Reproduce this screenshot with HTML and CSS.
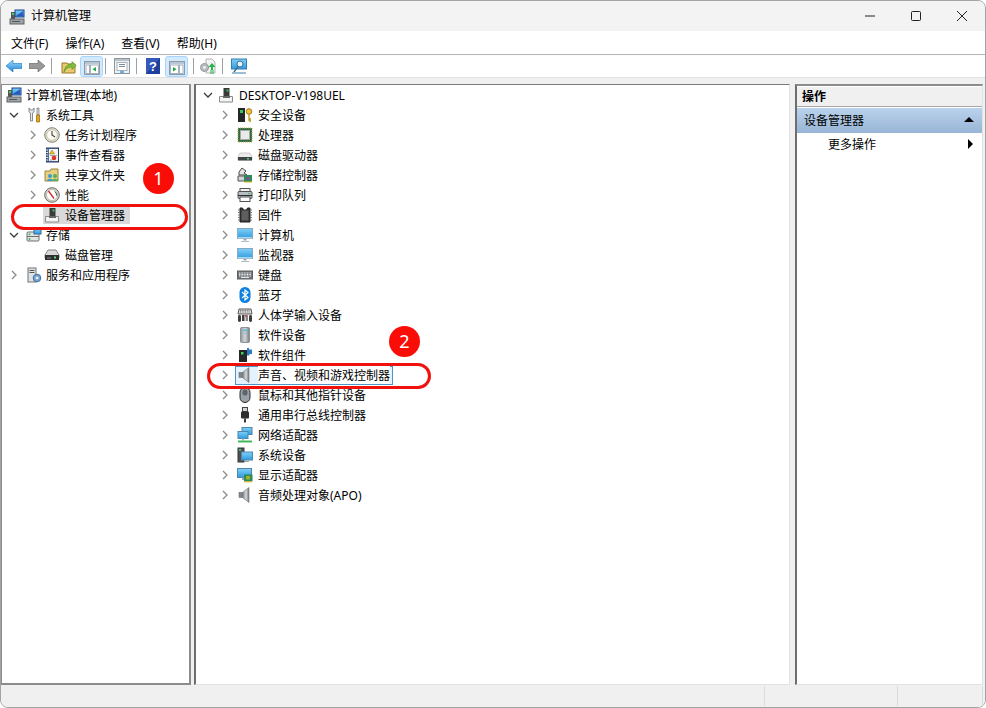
FILE: index.html
```html
<!DOCTYPE html>
<html lang="zh-CN">
<head>
<meta charset="utf-8">
<title>计算机管理</title>
<link rel="stylesheet" href="styles.css">
</head>
<body>
<svg class="defs" width="0" height="0">
  <defs>
    <linearGradient id="scr" x1="0" y1="0" x2="0" y2="1"><stop offset="0" stop-color="#7fd0f7"/><stop offset="1" stop-color="#2f9be0"/></linearGradient>
    <linearGradient id="blue" x1="0" y1="0" x2="0" y2="1"><stop offset="0" stop-color="#9fdcfb"/><stop offset="1" stop-color="#1f86d8"/></linearGradient>
    <linearGradient id="metal" x1="0" y1="0" x2="1" y2="0"><stop offset="0" stop-color="#8e9499"/><stop offset=".5" stop-color="#d4d8db"/><stop offset="1" stop-color="#74797d"/></linearGradient>
    <symbol id="i-mgmt" viewBox="0 0 16 16"><rect x="6" y="1" width="9" height="7" fill="url(#scr)" stroke="#1c3f8f"/><path d="M7 7l7-5v5z" fill="#2433a8" opacity=".7"/><rect x="2" y="3" width="4" height="7" fill="#555"/><rect x="3" y="4" width="2" height="2" fill="#3bd46a"/><rect x="1" y="10" width="14" height="5" fill="#9da3a6" stroke="#5e6365"/><path d="M3 12.500h8" stroke="#555"/></symbol>
    <symbol id="i-device" viewBox="0 0 16 16"><rect x="5.500" y="1" width="6" height="8" fill="#3a3a3a"/><rect x="8.500" y="2.500" width="2" height="2" fill="#38c45c"/><path d="M1.500 9.500h13v5.500h-13z" fill="#f4f4f4" stroke="#8a8a8a"/><path d="M5 9h7v2H5z" fill="#666"/></symbol>
    <symbol id="i-tools" viewBox="0 0 16 16"><path d="M3 1v4l1.500 1v8h2V6L8 5V1L6.500 3h-2z" fill="#e9eaeb" stroke="#6d7174" stroke-width=".8"/><path d="M11 1h2v7h-2z" fill="#d8d8d8" stroke="#777" stroke-width=".7"/><path d="M10.500 8h3v7h-3z" fill="#e2a81a" stroke="#92690c" stroke-width=".7"/></symbol>
    <symbol id="i-clock" viewBox="0 0 16 16"><circle cx="8" cy="8" r="7.300" fill="#e3dfd2" stroke="#80806f"/><circle cx="8" cy="8" r="5.300" fill="#fbfaf3" stroke="#b3ae98" stroke-width=".6"/><path d="M8 4v4l3 2" fill="none" stroke="#3d3d3d" stroke-width="1.100"/></symbol>
    <symbol id="i-event" viewBox="0 0 16 16"><rect x="2.500" y="1" width="12" height="14" fill="#4a6fa5" stroke="#2b3f63"/><rect x="5" y="2" width="9" height="12" fill="#f3f3f3"/><path d="M8 3l2.500 4h-5z" fill="#f0c020" stroke="#8c6f0c" stroke-width=".5"/><circle cx="10" cy="11" r="2.300" fill="#d9342b"/><path d="M6 8.500h7M6 13h2" stroke="#889" stroke-width=".8"/><path d="M2 3h2M2 5.500h2M2 8h2M2 10.500h2M2 13h2" stroke="#ddd"/></symbol>
    <symbol id="i-share" viewBox="0 0 16 16"><path d="M1 4h5l1-2h7v12H1z" fill="#e8d083" stroke="#9c8438"/><circle cx="6" cy="9" r="2" fill="#3d9ad1"/><path d="M3 14c0-3 6-3 6 0z" fill="#3d9ad1"/><circle cx="11" cy="9" r="2" fill="#4db45c"/><path d="M8 14c0-3 6-3 6 0z" fill="#4db45c"/></symbol>
    <symbol id="i-perf" viewBox="0 0 16 16"><circle cx="8" cy="8" r="7.300" fill="#d8d8d0" stroke="#6b6b64"/><circle cx="8" cy="8" r="5.500" fill="#fff" stroke="#99998f" stroke-width=".6"/><path d="M4.500 4L10 11.500" stroke="#d22a20" stroke-width="1.300"/><path d="M11 4.500a5 5 0 0 1 1.500 4" stroke="#3f3f3f" fill="none"/></symbol>
    <symbol id="i-storage" viewBox="0 0 16 16"><rect x="1" y="5" width="12" height="9" rx="1" fill="#e4e4e4" stroke="#6e6e6e"/><path d="M1 9.500h12" stroke="#6e6e6e"/><rect x="8" y="1" width="7" height="6" fill="url(#scr)" stroke="#336a99"/><circle cx="3.500" cy="7.300" r="1" fill="#45b45e"/><circle cx="3.500" cy="12" r="1" fill="#45b45e"/></symbol>
    <symbol id="i-disk" viewBox="0 0 16 16"><path d="M4 3h8l3 5v3H1V8z" fill="#d9d9d9" stroke="#848484"/><rect x="1" y="8" width="14" height="5" fill="#2f2f2f"/><rect x="10" y="9.500" width="2" height="2" fill="#4ee07a"/><path d="M3 11h4" stroke="#8a8a8a"/></symbol>
    <symbol id="i-service" viewBox="0 0 16 16"><rect x="2" y="1" width="8" height="14" fill="#dfe3e6" stroke="#6e7478"/><path d="M3.500 3.500h5M3.500 5.500h5" stroke="#555"/><circle cx="11" cy="11" r="3.800" fill="#7aa7cf" stroke="#3f6d99"/><circle cx="11" cy="11" r="1.300" fill="#eef"/></symbol>
    <symbol id="i-security" viewBox="0 0 16 16"><rect x="1" y="1" width="7" height="14" fill="#272727"/><rect x="3" y="3" width="3" height="3" fill="#36c75c"/><circle cx="12" cy="4.500" r="2.800" fill="#f0c040" stroke="#a27b12"/><path d="M12 7v7M12 12h2M12 14h2" stroke="#bf9218" stroke-width="1.300"/></symbol>
    <symbol id="i-cpu" viewBox="0 0 16 16"><rect x="1" y="1" width="14" height="14" fill="#2d6b49"/><path d="M1 1h14v14H1z" fill="none" stroke="#c8a53a" stroke-dasharray="1 1"/><rect x="3.500" y="3.500" width="9" height="9" fill="#e7ebe9" stroke="#a5aaa7"/></symbol>
    <symbol id="i-drive" viewBox="0 0 16 16"><path d="M3 6h10l2 4v3H1v-3z" fill="#ececec" stroke="#b3b3b3" stroke-width=".6"/><rect x="1" y="10" width="14" height="3.500" fill="#3f4447"/><rect x="10" y="11" width="2" height="1.500" fill="#54d67c"/></symbol>
    <symbol id="i-ctrl" viewBox="0 0 16 16"><path d="M5 1l4 3-2 2 3 2H2V5z" fill="#e4e4e4" stroke="#4a4a4a"/><path d="M1 9h7v5H1z" fill="#cfd2d4" stroke="#555"/><rect x="7" y="8" width="8" height="7" fill="#2f8a58"/><rect x="9" y="10" width="3" height="3" fill="#7a4fa0"/><path d="M7 15h8" stroke="#e2b72d"/></symbol>
    <symbol id="i-printer" viewBox="0 0 16 16"><rect x="3" y="1.500" width="10" height="3" fill="#f2f2f2" stroke="#555"/><rect x="1" y="4.500" width="14" height="7" rx="1" fill="#b9c0c4" stroke="#4c5256"/><rect x="11" y="6" width="2" height="1.200" fill="#41c46a"/><rect x="3" y="10" width="10" height="4.500" fill="#fff" stroke="#555"/><rect x="1" y="8" width="14" height="1" fill="#2b2f32"/></symbol>
    <symbol id="i-chip" viewBox="0 0 16 16"><path d="M3 1h2.500l1 2h3l1-2H13v14H3z" fill="#333" stroke="#222"/><rect x="4.500" y="3.500" width="7" height="10" fill="#5e5e5e"/><path d="M1 3h2M1 5.500h2M1 8h2M1 10.500h2M1 13h2M13 3h2M13 5.500h2M13 8h2M13 10.500h2M13 13h2" stroke="#777"/></symbol>
    <symbol id="i-monitor" viewBox="0 0 16 16"><rect x=".5" y="1.500" width="15" height="10" fill="url(#scr)" stroke="#86a9c2"/><path d="M1 10.800h14" stroke="#dceffa"/><path d="M6.500 12h3v1.500h-3z" fill="#98a8b3"/><path d="M4 14h8v1H4z" fill="#b2bcc4"/></symbol>
    <symbol id="i-keyboard" viewBox="0 0 16 16"><rect x=".5" y="4" width="15" height="8" fill="#70767a" stroke="#5c6063"/><path d="M2 6h12M2 7.500h12M2 9h12" stroke="#eceeef" stroke-dasharray="1 .6"/><path d="M4 10.500h8" stroke="#e4e6e7"/></symbol>
    <symbol id="i-bt" viewBox="0 0 16 16"><rect x="2.500" y="0" width="11" height="16" rx="5.500" fill="#0c7fdf"/><path d="M5 5l6 5.500L8 13V3l3 2.500L5 11" fill="none" stroke="#fff" stroke-width="1.200"/></symbol>
    <symbol id="i-hid" viewBox="0 0 16 16"><path d="M2 2h12l1 5H1z" fill="#dcdcdc" stroke="#575757"/><path d="M3 3.500h10M3 5h10" stroke="#777" stroke-dasharray="1 .7"/><rect x="1" y="8" width="3" height="7" rx="1.400" fill="#3e3e3e"/><rect x="12" y="8" width="3" height="7" rx="1.400" fill="#3e3e3e"/><rect x="5" y="8" width="2.500" height="6" fill="#3e3e3e"/><rect x="8.500" y="8" width="2.500" height="6" fill="#888"/><rect x="8" y="8" width="1.500" height="1.500" fill="#d33"/></symbol>
    <symbol id="i-swdev" viewBox="0 0 16 16"><rect x="3.500" y="0.500" width="9" height="15" rx="1" fill="url(#metal)" stroke="#8c9296"/><rect x="6" y="2.500" width="4" height="1.500" fill="#49c4d8"/><circle cx="8" cy="6" r=".8" fill="#49c4d8"/></symbol>
    <symbol id="i-swcomp" viewBox="0 0 16 16"><rect x="2" y="3" width="8" height="12" fill="#262626"/><rect x="4" y="5" width="2.500" height="2.500" fill="#38d35e"/><path d="M10 1h2v1.500h3V7h-2.500v1.500H10z" fill="#2b7cc4"/></symbol>
    <symbol id="i-speaker" viewBox="0 0 16 16"><rect x="2" y="5.500" width="4" height="5" fill="#7f8589" stroke="#6c7174" stroke-width=".6"/><path d="M6 5L12 .5v15L6 11z" fill="url(#metal)" stroke="#6f7477" stroke-width=".6"/></symbol>
    <symbol id="i-mouse" viewBox="0 0 16 16"><rect x="3" y="0.500" width="10" height="15" rx="5" fill="#9aa1a8" stroke="#2c2c2c"/><rect x="5.500" y="2.500" width="5" height="6" rx="2.300" fill="#5d646b"/></symbol>
    <symbol id="i-usb" viewBox="0 0 16 16"><rect x="5.500" y="0.500" width="5" height="4" fill="#d5d5d5" stroke="#444"/><rect x="4" y="4.500" width="8" height="7" rx="1" fill="#2e2e2e"/><path d="M7 11.500h2V15.500H7z" fill="#3c3c3c"/></symbol>
    <symbol id="i-net" viewBox="0 0 16 16"><rect x="5" y="0.500" width="10" height="7" fill="url(#scr)" stroke="#4e86ad"/><rect x="1" y="4.500" width="10" height="7" fill="url(#scr)" stroke="#4e86ad"/><path d="M5 11.500h2v2H5z" fill="#9bb"/><path d="M1 14.500h14" stroke="#42b857" stroke-width="2"/></symbol>
    <symbol id="i-sys" viewBox="0 0 16 16"><rect x="1" y="1" width="6" height="14" fill="#4c5154" stroke="#33373a"/><rect x="2" y="2" width="2" height="1.500" fill="#58d47c"/><rect x="4.500" y="5" width="11" height="8" fill="url(#scr)" stroke="#4e86ad"/><path d="M8 13.500h4v1.500H8z" fill="#9aa"/></symbol>
    <symbol id="i-gpu" viewBox="0 0 16 16"><rect x=".5" y="1.500" width="14" height="9" fill="url(#scr)" stroke="#4e86ad"/><path d="M5 10.500h4V13H5z" fill="#96a4ae"/><rect x="7" y="7.500" width="8.500" height="7" fill="#2f8a58"/><rect x="9" y="9" width="4" height="3.500" fill="#98b42e"/><path d="M7 14.800h8" stroke="#e2b72d"/></symbol>
    <symbol id="t-back" viewBox="0 0 16 12"><path d="M7 0L0 6l7 6V8.500h9v-5H7z" fill="url(#blue)" stroke="#1d74c2" stroke-width=".6"/></symbol>
    <symbol id="t-fwd" viewBox="0 0 16 12"><path d="M9 0l7 6-7 6V8.500H0v-5h9z" fill="#9a9a9a" stroke="#5c5c5c" stroke-width=".6"/></symbol>
    <symbol id="t-folder" viewBox="0 0 16 16"><path d="M1 5h5l1 1h7v9H1z" fill="#e9c96c" stroke="#987a2a"/><path d="M3 14c1-6 4-8 8-8V3.500l4 4-4 4V9c-3 0-6 1-8 5z" fill="#82bf3b" stroke="#4b8a22" stroke-width=".6"/></symbol>
    <symbol id="t-left" viewBox="0 0 16 14"><rect x=".5" y=".5" width="15" height="13" fill="#eef3f8" stroke="#8a9aaa"/><rect x="1" y="1" width="14" height="2" fill="#b9c6d3"/><rect x="2" y="4" width="3.500" height="8.500" fill="#fff" stroke="#a4b2c0"/><rect x="6.500" y="4" width="8" height="8.500" fill="#fff" stroke="#a4b2c0"/><path d="M12 6v4.500L8.500 8.200z" fill="#1fa83c"/></symbol>
    <symbol id="t-right" viewBox="0 0 16 14"><rect x=".5" y=".5" width="15" height="13" fill="#eef3f8" stroke="#8a9aaa"/><rect x="1" y="1" width="14" height="2" fill="#b9c6d3"/><rect x="1.500" y="4" width="8" height="8.500" fill="#fff" stroke="#a4b2c0"/><rect x="10.500" y="4" width="3.500" height="8.500" fill="#fff" stroke="#a4b2c0"/><path d="M4 6v4.500l3.500-2.300z" fill="#1fa83c"/></symbol>
    <symbol id="t-list" viewBox="0 0 16 16"><rect x=".5" y=".5" width="15" height="15" fill="#eef1f3" stroke="#8a959e"/><rect x="1" y="1" width="14" height="2" fill="#b8c2ca"/><rect x="3" y="4.500" width="10" height="8" fill="#fff" stroke="#a8b2ba"/><path d="M5 6.500h6M5 8.500h6" stroke="#7d8c98"/><path d="M6 14h4" stroke="#3f97db" stroke-width="1.300"/></symbol>
    <symbol id="t-help" viewBox="0 0 14 16"><rect width="14" height="16" fill="#1f3f9c"/><path d="M0 0h14L0 16z" fill="#3558b9"/><text x="7" y="13" font-size="13" font-weight="700" font-family="Liberation Sans" text-anchor="middle" fill="#fff">?</text></symbol>
    <symbol id="t-gear" viewBox="0 0 18 16"><path d="M7 1h6l3 3v11H7z" fill="#f2f2f2" stroke="#b5b5b5"/><circle cx="5.500" cy="9.500" r="4" fill="#b5babe" stroke="#7f8488" stroke-dasharray="2 .8"/><circle cx="5.500" cy="9.500" r="1.400" fill="#f2f2f2"/><path d="M13 5l3.500 4H14v3h-2V9H9.500z" fill="#28b44a"/><path d="M11 13h4M11 15h4" stroke="#28b44a" stroke-width="1.200"/></symbol>
    <symbol id="t-screen" viewBox="0 0 16 16"><rect x=".5" y="1" width="15" height="10" fill="url(#scr)" stroke="#397fb0"/><circle cx="9" cy="6" r="3" fill="#dff3fc" stroke="#3f6f90"/><path d="M7 8.500L3 14" stroke="#3f6f90" stroke-width="1.400"/><path d="M1 15h14" stroke="#397fb0"/></symbol>
    <symbol id="chev-r" viewBox="0 0 8 10"><path d="M2 1l4 4-4 4" fill="none" stroke="#8b8b8b" stroke-width="1.300"/></symbol>
    <symbol id="chev-d" viewBox="0 0 10 8"><path d="M1 2l4 4 4-4" fill="none" stroke="#3a3a3a" stroke-width="1.300"/></symbol>
  </defs>
</svg>

<div class="window">
  <header class="titlebar">
    <svg class="ico title-ico"><use href="#i-mgmt"/></svg>
    <span class="title-text">计算机管理</span>
    <div class="controls">
      <svg class="ctl" viewBox="0 0 10 10"><path d="M0 5h10" stroke="#222"/></svg>
      <svg class="ctl" viewBox="0 0 10 10"><rect x=".5" y=".5" width="9" height="9" rx="1" fill="none" stroke="#222"/></svg>
      <svg class="ctl" viewBox="0 0 10 10"><path d="M0 0l10 10M10 0L0 10" stroke="#222"/></svg>
    </div>
  </header>

  <nav class="menubar">
    <span class="menu-item">文件(F)</span>
    <span class="menu-item">操作(A)</span>
    <span class="menu-item">查看(V)</span>
    <span class="menu-item">帮助(H)</span>
  </nav>

  <div class="toolbar">
    <svg class="tb-arrow"><use href="#t-back"/></svg>
    <svg class="tb-arrow tb-fwd"><use href="#t-fwd"/></svg>
    <i class="sep"></i>
    <svg class="tb-ico tb-folder"><use href="#t-folder"/></svg>
    <span class="tb-btn"><svg class="tb-pane"><use href="#t-left"/></svg></span>
    <i class="sep sep-a"></i>
    <svg class="tb-ico tb-list"><use href="#t-list"/></svg>
    <i class="sep sep-b"></i>
    <svg class="tb-help"><use href="#t-help"/></svg>
    <span class="tb-btn tb-btn-b"><svg class="tb-pane"><use href="#t-right"/></svg></span>
    <i class="sep sep-c"></i>
    <svg class="tb-gear"><use href="#t-gear"/></svg>
    <i class="sep sep-d"></i>
    <svg class="tb-ico tb-screen"><use href="#t-screen"/></svg>
  </div>

  <main class="panes">
    <section class="pane pane-left">
      <div class="row"><svg class="ico root-ico"><use href="#i-mgmt"/></svg><span class="label label-l">计算机管理(本地)</span></div>
      <div class="row d1"><svg class="chev-d"><use href="#chev-d"/></svg><svg class="ico"><use href="#i-tools"/></svg><span class="label label-l">系统工具</span></div>
      <div class="row d2"><svg class="chev"><use href="#chev-r"/></svg><svg class="ico"><use href="#i-clock"/></svg><span class="label">任务计划程序</span></div>
      <div class="row d2"><svg class="chev"><use href="#chev-r"/></svg><svg class="ico"><use href="#i-event"/></svg><span class="label">事件查看器</span></div>
      <div class="row d2"><svg class="chev"><use href="#chev-r"/></svg><svg class="ico"><use href="#i-share"/></svg><span class="label">共享文件夹</span></div>
      <div class="row d2"><svg class="chev"><use href="#chev-r"/></svg><svg class="ico"><use href="#i-perf"/></svg><span class="label">性能</span></div>
      <div class="row d2"><span class="chev"></span><span class="sel-grey"><svg class="ico"><use href="#i-device"/></svg><span class="label">设备管理器</span></span></div>
      <div class="row d1"><svg class="chev-d"><use href="#chev-d"/></svg><svg class="ico"><use href="#i-storage"/></svg><span class="label label-l">存储</span></div>
      <div class="row d2"><span class="chev"></span><svg class="ico"><use href="#i-disk"/></svg><span class="label">磁盘管理</span></div>
      <div class="row d1"><svg class="chev"><use href="#chev-r"/></svg><svg class="ico"><use href="#i-service"/></svg><span class="label label-l">服务和应用程序</span></div>
    </section>

    <section class="pane pane-mid">
      <div class="row m1"><svg class="chev-d"><use href="#chev-d"/></svg><svg class="ico"><use href="#i-device"/></svg><span class="label">DESKTOP-V198UEL</span></div>
      <div class="row m2"><svg class="chev"><use href="#chev-r"/></svg><svg class="ico"><use href="#i-security"/></svg><span class="label">安全设备</span></div>
      <div class="row m2"><svg class="chev"><use href="#chev-r"/></svg><svg class="ico"><use href="#i-cpu"/></svg><span class="label">处理器</span></div>
      <div class="row m2"><svg class="chev"><use href="#chev-r"/></svg><svg class="ico"><use href="#i-drive"/></svg><span class="label">磁盘驱动器</span></div>
      <div class="row m2"><svg class="chev"><use href="#chev-r"/></svg><svg class="ico"><use href="#i-ctrl"/></svg><span class="label">存储控制器</span></div>
      <div class="row m2"><svg class="chev"><use href="#chev-r"/></svg><svg class="ico"><use href="#i-printer"/></svg><span class="label">打印队列</span></div>
      <div class="row m2"><svg class="chev"><use href="#chev-r"/></svg><svg class="ico"><use href="#i-chip"/></svg><span class="label">固件</span></div>
      <div class="row m2"><svg class="chev"><use href="#chev-r"/></svg><svg class="ico"><use href="#i-monitor"/></svg><span class="label">计算机</span></div>
      <div class="row m2"><svg class="chev"><use href="#chev-r"/></svg><svg class="ico"><use href="#i-monitor"/></svg><span class="label">监视器</span></div>
      <div class="row m2"><svg class="chev"><use href="#chev-r"/></svg><svg class="ico"><use href="#i-keyboard"/></svg><span class="label">键盘</span></div>
      <div class="row m2"><svg class="chev"><use href="#chev-r"/></svg><svg class="ico"><use href="#i-bt"/></svg><span class="label">蓝牙</span></div>
      <div class="row m2"><svg class="chev"><use href="#chev-r"/></svg><svg class="ico"><use href="#i-hid"/></svg><span class="label">人体学输入设备</span></div>
      <div class="row m2"><svg class="chev"><use href="#chev-r"/></svg><svg class="ico"><use href="#i-swdev"/></svg><span class="label">软件设备</span></div>
      <div class="row m2"><svg class="chev"><use href="#chev-r"/></svg><svg class="ico"><use href="#i-swcomp"/></svg><span class="label">软件组件</span></div>
      <div class="row m2"><svg class="chev"><use href="#chev-r"/></svg><span class="sel-blue"><svg class="ico"><use href="#i-speaker"/></svg><span class="label">声音、视频和游戏控制器</span></span></div>
      <div class="row m2"><svg class="chev"><use href="#chev-r"/></svg><svg class="ico"><use href="#i-mouse"/></svg><span class="label">鼠标和其他指针设备</span></div>
      <div class="row m2"><svg class="chev"><use href="#chev-r"/></svg><svg class="ico"><use href="#i-usb"/></svg><span class="label">通用串行总线控制器</span></div>
      <div class="row m2"><svg class="chev"><use href="#chev-r"/></svg><svg class="ico"><use href="#i-net"/></svg><span class="label">网络适配器</span></div>
      <div class="row m2"><svg class="chev"><use href="#chev-r"/></svg><svg class="ico"><use href="#i-sys"/></svg><span class="label">系统设备</span></div>
      <div class="row m2"><svg class="chev"><use href="#chev-r"/></svg><svg class="ico"><use href="#i-gpu"/></svg><span class="label">显示适配器</span></div>
      <div class="row m2"><svg class="chev"><use href="#chev-r"/></svg><svg class="ico"><use href="#i-speaker"/></svg><span class="label">音频处理对象(APO)</span></div>
    </section>

    <aside class="pane pane-right">
      <div class="act-head">操作</div>
      <div class="act-group"><span>设备管理器</span><i class="tri-up"></i></div>
      <div class="act-item"><span>更多操作</span><i class="tri-right"></i></div>
    </aside>
  </main>

  <footer class="statusbar">
    <span class="st st-a"></span>
    <span class="st st-b"></span>
    <span class="st st-c"></span>
  </footer>
</div>

<div class="mark mark-1"></div>
<div class="mark mark-2"></div>
<div class="badge badge-1">1</div>
<div class="badge badge-2">2</div>
</body>
</html>
```

FILE: styles.css
```css
* { box-sizing: border-box; }
html, body { margin: 0; padding: 0; background: #fff; }
body {
  width: 986px;
  height: 708px;
  overflow: hidden;
  position: relative;
  font-family: "Noto Sans", "Noto Sans CJK SC", sans-serif;
  font-size: 12px;
  color: #000;
}
.defs { position: absolute; }

.window {
  width: 986px;
  height: 708px;
  display: flex;
  flex-direction: column;
  border: 1px solid #a3a3a3;
  border-radius: 8px;
  overflow: hidden;
  background: #f0f0f0;
}

.titlebar {
  height: 30px;
  flex: none;
  display: flex;
  align-items: center;
  background: #f3f3f3;
  padding-left: 8px;
}
.title-ico { margin-right: 6px; margin-top: 1px; }
.title-text { line-height: 28px; }
.controls {
  margin-left: auto;
  display: flex;
  gap: 36px;
  padding-right: 18px;
}
.ctl { width: 10px; height: 10px; display: block; }

.menubar {
  height: 24px;
  flex: none;
  display: flex;
  align-items: center;
  gap: 17px;
  padding-left: 10px;
  background: #fff;
  border-bottom: 1px solid #b4b4b4;
}

.toolbar {
  height: 23px;
  flex: none;
  display: flex;
  align-items: center;
  padding-left: 5px;
  background: #fff;
  border-bottom: 1px solid #e2e2e2;
}
.tb-arrow { width: 16px; height: 12px; }
.tb-fwd { margin-left: 7px; }
.tb-ico { width: 16px; height: 16px; }
.sep { width: 1px; height: 16px; background: #a0a0a0; flex: none; margin-left: 6px; }
.tb-folder { margin-left: 9px; }
.tb-btn {
  width: 23px;
  height: 21px;
  margin-left: 3px;
  display: flex;
  align-items: center;
  justify-content: center;
  background: #d3eafd;
  border: 1px solid #a6d6fd;
  border-radius: 3px;
}
.tb-pane { width: 16px; height: 14px; margin-top: 3px; }
.sep-a { margin-left: 2px; }
.tb-list { margin-left: 8px; }
.sep-b { margin-left: 6px; }
.tb-help { width: 14px; height: 16px; margin-left: 9px; }
.tb-btn-b { margin-left: 5px; }
.sep-c { margin-left: 5px; }
.tb-gear { width: 18px; height: 16px; margin-left: 5px; }
.sep-d { margin-left: 5px; }
.tb-screen { margin-left: 8px; }

.panes {
  flex: 1;
  min-height: 0;
  display: flex;
  padding-top: 6px;
  background: #f0f0f0;
}
.pane { background: #fff; height: 100%; }
.pane-left {
  width: 190px;
  border: 1px solid #8c8c8c;
  border-width: 1px 2px 2px 1px;
}
.pane-mid {
  width: 596px;
  margin-left: 3px;
  border-top: 1px solid #7a7a7a;
  border-left: 2px solid #6e6e6e;
  border-right: 1px solid #e2e2e2;
  border-bottom: 1px solid #e2e2e2;
}
.pane-right {
  width: 188px;
  margin-left: 5px;
  border-top: 2px solid #8c8c8c;
  border-left: 2px solid #6e6e6e;
  border-right: 1px solid #e2e2e2;
  border-bottom: 1px solid #e2e2e2;
}

.row {
  height: 20px;
  display: flex;
  align-items: center;
  white-space: nowrap;
}
.ico { width: 16px; height: 16px; flex: none; display: block; }
.label { margin-left: 5px; }
.label-l { margin-left: 4px; }
.chev { width: 8px; height: 10px; flex: none; display: block; }
.chev-d { width: 10px; height: 8px; flex: none; display: block; }

.root-ico { margin-left: 4px; }
.d1 { padding-left: 7px; }
.d1 .chev-d { margin-right: 7px; }
.d1 .chev { margin-left: 1px; margin-right: 8px; }
.d2 { padding-left: 27px; }
.d2 .chev { margin-right: 7px; }

.sel-grey {
  display: flex;
  align-items: center;
  height: 18px;
  width: 87px;
  margin-left: -1px;
  padding-left: 1px;
  background: #d9d9d9;
}

.m1 { padding-left: 7px; }
.m1 .chev-d { margin-right: 5px; }
.m2 { padding-left: 25px; }
.m2 .chev { margin-right: 8px; }

.sel-blue {
  display: flex;
  align-items: center;
  height: 19px;
  margin-left: -2px;
  padding-left: 1px;
  padding-right: 1px;
  background: #e4f2fb;
  border: 1px solid #4f94c9;
  width: 158px;
}
.sel-blue .label { background: #fff; }

.act-head {
  height: 20px;
  line-height: 19px;
  padding-left: 5px;
  margin-top: 1px;
  font-weight: 700;
  background: #f0f0f0;
  border-bottom: 1px solid #a8a8a8;
}
.act-group {
  height: 25px;
  margin-top: 1px;
  display: flex;
  align-items: center;
  justify-content: space-between;
  padding: 0 7px 2px 7px;
  background: linear-gradient(#bad2ec, #98b5d6);
}
.tri-up {
  width: 0; height: 0;
  border-left: 5px solid transparent;
  border-right: 5px solid transparent;
  border-bottom: 5px solid #000;
  margin-right: 1px;
}
.act-item {
  height: 22px;
  display: flex;
  align-items: center;
  justify-content: space-between;
  padding: 0 9px 0 31px;
}
.tri-right {
  width: 0; height: 0;
  border-top: 5px solid transparent;
  border-bottom: 5px solid transparent;
  border-left: 5px solid #000;
}

.statusbar {
  height: 22px;
  flex: none;
  display: flex;
  background: #f0f0f0;
  padding-top: 1px;
}
.st { border-right: 1px solid #dcdcdc; height: 20px; }
.st-a { width: 764px; }
.st-b { width: 133px; }
.st-c { width: 85px; }

.mark {
  position: absolute;
  border: 3px solid #f0110d;
  border-radius: 13px;
}
.mark-1 { left: 11px; top: 204px; width: 177px; height: 26px; }
.mark-2 { left: 207px; top: 363px; width: 224px; height: 26px; }
.badge {
  position: absolute;
  width: 31px;
  height: 31px;
  border-radius: 50%;
  background: #fb0d07;
  color: #fff;
  font-family: "Noto Sans", sans-serif;
  font-size: 18px;
  line-height: 31px;
  text-align: center;
}
.badge-1 { left: 143px; top: 163px; }
.badge-2 { left: 389px; top: 326px; }
```
